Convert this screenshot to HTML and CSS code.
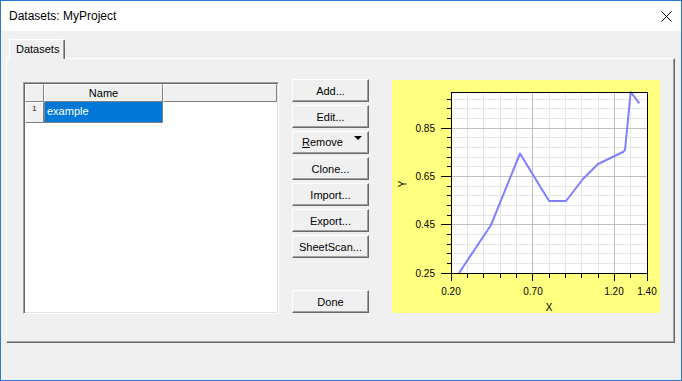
FILE: index.html
```html
<!DOCTYPE html>
<html>
<head>
<meta charset="utf-8">
<link rel="stylesheet" href="styles.css">
</head>
<body>
<div class="window">
  <div class="titlebar">
    <span class="title">Datasets: MyProject</span>
    <svg class="close" width="11" height="11" viewBox="0 0 11 11"><path d="M0.5 0.5 L10.5 10.5 M10.5 0.5 L0.5 10.5" stroke="#000" stroke-width="1"/></svg>
  </div>
  <div class="client">
    <div class="tabs"><div class="tab">Datasets</div></div>
    <div class="panel">
      <div class="grid">
        <div class="hcell corner"></div>
        <div class="hcell">Name</div>
        <div class="hcell"></div>
        <div class="rowhead">1</div>
        <div class="cell selected">example</div>
        <div class="cell blank"></div>
      </div>
      <div class="buttons">
        <div class="btn">Add...</div>
        <div class="btn">Edit...</div>
        <div class="btn split"><span><u>R</u>emove</span><span class="arrow"></span></div>
        <div class="btn">Clone...</div>
        <div class="btn">Import...</div>
        <div class="btn">Export...</div>
        <div class="btn">SheetScan...</div>
        <div class="btn done">Done</div>
      </div>
      <div class="plot">
        <svg width="268" height="233" viewBox="0 0 268 233">
          <rect x="59.5" y="12.5" width="196" height="181" fill="#fff"/>
          <g stroke="#e6e6e6" stroke-width="1">
            <path d="M75.5 12.5V193M91.5 12.5V193M108.5 12.5V193M124.5 12.5V193M157.5 12.5V193M173.5 12.5V193M189.5 12.5V193M206.5 12.5V193M238.5 12.5V193"/>
            <path d="M59.5 183.5H255M59.5 173.5H255M59.5 164.5H255M59.5 154.5H255M59.5 135.5H255M59.5 125.5H255M59.5 115.5H255M59.5 106.5H255M59.5 86.5H255M59.5 77.5H255M59.5 67.5H255M59.5 57.5H255M59.5 38.5H255M59.5 28.5H255M59.5 19.5H255"/>
          </g>
          <g stroke="#c0c0c0" stroke-width="1">
            <path d="M140.5 12.5V193M222.5 12.5V193"/>
            <path d="M59.5 144.5H255M59.5 96.5H255M59.5 48.5H255"/>
          </g>
          <polyline points="67,193 99,145 128,73.5 157,121 174,121 191,99 206,84 231,72 233,70 238.7,12 247.3,23.3" fill="none" stroke="#7f7fff" stroke-width="2" stroke-linejoin="round"/>
          <rect x="59.5" y="12.5" width="196" height="181" fill="none" stroke="#000" stroke-width="1"/>
          <g stroke="#000" stroke-width="1">
            <path d="M55 183.5H59M55 173.5H59M55 164.5H59M55 154.5H59M55 135.5H59M55 125.5H59M55 115.5H59M55 106.5H59M55 86.5H59M55 77.5H59M55 67.5H59M55 57.5H59M55 38.5H59M55 28.5H59M55 19.5H59"/>
            <path d="M49 193.5H59M49 144.5H59M49 96.5H59M49 48.5H59"/>
            <path d="M75.5 193V198M91.5 193V198M108.5 193V198M124.5 193V198M157.5 193V198M173.5 193V198M189.5 193V198M206.5 193V198M238.5 193V198"/>
            <path d="M59.5 193V201M140.5 193V201M222.5 193V201M255.5 193V201"/>
          </g>
          <g class="ax">
            <text x="43" y="52" text-anchor="end">0.85</text>
            <text x="43" y="100" text-anchor="end">0.65</text>
            <text x="43" y="148" text-anchor="end">0.45</text>
            <text x="43" y="197" text-anchor="end">0.25</text>
            <text x="59" y="215" text-anchor="middle">0.20</text>
            <text x="141" y="215" text-anchor="middle">0.70</text>
            <text x="222" y="215" text-anchor="middle">1.20</text>
            <text x="255" y="215" text-anchor="middle">1.40</text>
            <text x="157" y="231" text-anchor="middle">X</text>
            <text x="14" y="104" text-anchor="middle" transform="rotate(-90 14 104)">Y</text>
          </g>
        </svg>
      </div>
    </div>
  </div>
</div>
</body>
</html>
```

FILE: styles.css
```css
html, body {
  margin: 0;
  padding: 0;
  background: #f0f0f0;
  overflow: hidden;
}
.window {
  width: 682px;
  height: 381px;
  box-sizing: border-box;
  border: 1px solid #2a7ad2;
  background: #f0f0f0;
  font-family: "Liberation Sans", Arial, sans-serif;
  font-size: 11px;
  color: #000;
}
.titlebar {
  height: 30px;
  background: #fff;
  display: flex;
  align-items: center;
  justify-content: space-between;
  padding: 0 9px 0 8px;
}
.title {
  font-size: 12px;
  font-family: "Liberation Sans", Arial, sans-serif;
}
.close {
  display: block;
}
.client {
  padding: 8px 6px 0 5px;
}
.tabs {
  display: flex;
  height: 19px;
}
.tab {
  position: relative;
  z-index: 1;
  margin-left: 3px;
  width: 56px;
  height: 20px;
  box-sizing: border-box;
  background: #f0f0f0;
  border-top: 1px solid #fff;
  border-left: 1px solid #fff;
  border-right: 1px solid #696969;
  box-shadow: inset -1px 0 #a0a0a0;
  border-radius: 2px 2px 0 0;
  padding: 2px 0 0 6px;
  line-height: 14px;
}
.panel {
  height: 285px;
  box-sizing: border-box;
  border-top: 1px solid #fff;
  border-left: 1px solid #fff;
  border-right: 1px solid #696969;
  border-bottom: 1px solid #696969;
  box-shadow: inset -1px -1px #a0a0a0;
  display: flex;
  align-items: flex-start;
  padding: 20px 0 0 16px;
}
.grid {
  margin-top: 3px;
  width: 256px;
  height: 232px;
  box-sizing: border-box;
  background: #fff;
  border-top: 1px solid #a0a0a0;
  border-left: 1px solid #a0a0a0;
  border-right: 1px solid #fff;
  border-bottom: 1px solid #fff;
  box-shadow: inset 1px 1px #696969, inset -1px -1px #e3e3e3;
  padding: 1px 1px 0 1px;
  display: grid;
  grid-template-columns: 19px 119px 1fr;
  grid-template-rows: 18px 21px;
  align-content: start;
}
.hcell, .rowhead {
  background: #f0f0f0;
  box-sizing: border-box;
  border-top: 1px solid #fff;
  border-left: 1px solid #fff;
  border-right: 1px solid #808080;
  border-bottom: 1px solid #808080;
  text-align: center;
  line-height: 16px;
}
.rowhead {
  font-size: 8px;
  line-height: 12px;
  color: #400;
}
.cell {
  box-sizing: border-box;
  line-height: 19px;
}
.selected {
  background: #0078d7;
  color: #fff;
  border: 1px solid #808080;
  border-top: none;
  padding-left: 2px;
}
.buttons {
  margin-left: 13px;
  width: 77px;
  display: flex;
  flex-direction: column;
  gap: 3px;
}
.btn {
  height: 23px;
  box-sizing: border-box;
  background: #f0f0f0;
  border-top: 1px solid #fff;
  border-left: 1px solid #fff;
  border-right: 1px solid #696969;
  border-bottom: 1px solid #696969;
  box-shadow: inset -1px -1px #a0a0a0;
  display: flex;
  align-items: center;
  justify-content: center;
}
.split {
  justify-content: space-between;
  align-items: flex-start;
  padding: 0 6px 0 9px;
  line-height: 20px;
}
.arrow {
  width: 0;
  height: 0;
  margin-top: 4px;
  border-left: 4px solid transparent;
  border-right: 4px solid transparent;
  border-top: 4px solid #000;
}
.done {
  margin-top: 29px;
}
.plot {
  margin-left: 23px;
  margin-top: 1px;
  width: 268px;
  height: 233px;
  background: #ffff80;
}
.plot svg {
  display: block;
}
.ax text {
  font-family: "Liberation Sans", Arial, sans-serif;
  font-size: 10px;
  fill: #000;
}
```
